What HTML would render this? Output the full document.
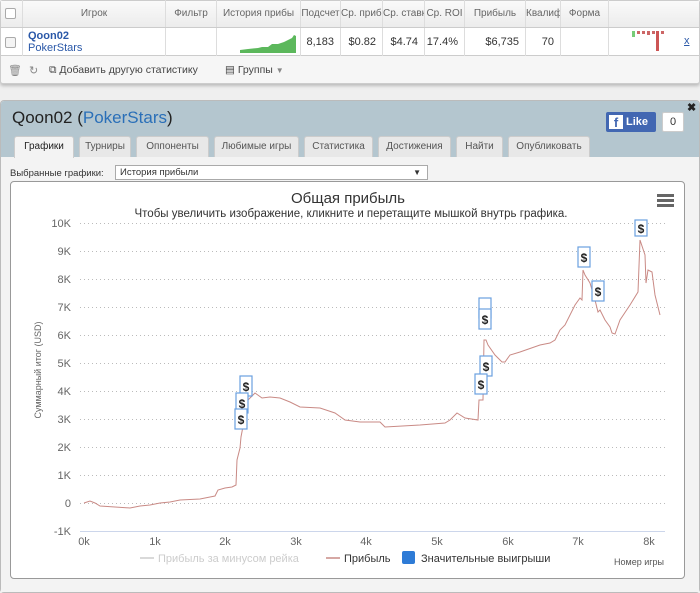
<!DOCTYPE html>
<html><head><meta charset="utf-8"><style>
*{margin:0;padding:0;box-sizing:border-box}
body{width:700px;height:593px;background:#efefef;font-family:"Liberation Sans",sans-serif;position:relative;overflow:hidden;font-size:11px;color:#333}
.a{position:absolute}
.th{position:absolute;top:0;height:27px;line-height:27px;text-align:center;color:#666;font-size:10px;border-right:1px solid #ddd;white-space:nowrap;overflow:hidden}
.td{position:absolute;top:28px;height:28px;line-height:28px;text-align:right;padding-right:6px;color:#333;font-size:11px;border-right:1px solid #ddd}
.tab{position:absolute;top:136px;height:21px;line-height:20px;background:#e8e8e8;border:1px solid #ccc;border-bottom:none;border-radius:3px 3px 0 0;font-size:10px;color:#555;text-align:center}
</style></head><body>
<!-- top table -->
<div class="a" style="left:0;top:0;width:700px;height:84px;background:#f6f6f6;border:1px solid #ccc;border-radius:3px;box-shadow:0 2px 3px #bbb"></div>
<div class="a" style="left:1px;top:1px;width:698px;height:27px;background:linear-gradient(#fafafa,#ececec);border-bottom:1px solid #ccc"></div>
<div class="a" style="left:1px;top:28px;width:698px;height:28px;background:#fff;border-bottom:1px solid #ccc"></div>
<div class="a" style="left:5px;top:8px;width:11px;height:11px;border:1px solid #aaa;border-radius:2px;background:#fff"></div>
<div class="a" style="left:5px;top:37px;width:11px;height:11px;border:1px solid #aaa;border-radius:2px;background:#f4f4f4"></div>
<div class="th" style="left:0;width:23px"></div>
<div class="th" style="left:23px;width:143px">Игрок</div>
<div class="th" style="left:166px;width:51px">Фильтр</div>
<div class="th" style="left:217px;width:84px">История прибы</div>
<div class="th" style="left:301px;width:40px">Подсчет</div>
<div class="th" style="left:341px;width:42px">Ср. прибы</div>
<div class="th" style="left:383px;width:42px">Ср. ставк</div>
<div class="th" style="left:425px;width:40px">Ср. ROI</div>
<div class="th" style="left:465px;width:61px">Прибыль</div>
<div class="th" style="left:526px;width:35px">Квалиф</div>
<div class="th" style="left:561px;width:48px">Форма</div>
<div class="td" style="left:0;width:23px"></div>
<div class="td" style="left:23px;width:143px"></div>
<div class="a" style="left:28px;top:30px;font-weight:bold;color:#2a58a8;font-size:11px">Qoon02</div>
<div class="a" style="left:28px;top:42px;color:#2a58a8;font-size:11px">PokerStars</div>
<div class="td" style="left:166px;width:51px"></div>
<div class="td" style="left:217px;width:84px"></div>
<svg class="a" style="left:228px;top:32px" width="70" height="22"><polygon points="4,21 12,21 12,18 20,17 30,16 34,15 40,15 44,12 50,12 56,10 60,8 64,6 66,3 68,4 68,21" fill="#5cb85c"/></svg>
<div class="td" style="left:301px;width:40px">8,183</div>
<div class="td" style="left:341px;width:42px">$0.82</div>
<div class="td" style="left:383px;width:42px">$4.74</div>
<div class="td" style="left:425px;width:40px">17.4%</div>
<div class="td" style="left:465px;width:61px">$6,735</div>
<div class="td" style="left:526px;width:35px">70</div>
<div class="td" style="left:561px;width:48px"></div>
<div class="a" style="left:632px;top:31px;width:3px;height:6px;background:#7c7"></div>
<div class="a" style="left:637px;top:31px;width:3px;height:3px;background:#c66"></div>
<div class="a" style="left:642px;top:31px;width:3px;height:3px;background:#c66"></div>
<div class="a" style="left:647px;top:31px;width:3px;height:4px;background:#c66"></div>
<div class="a" style="left:652px;top:31px;width:3px;height:3px;background:#c66"></div>
<div class="a" style="left:656px;top:31px;width:3px;height:20px;background:#c55"></div>
<div class="a" style="left:661px;top:31px;width:3px;height:3px;background:#c66"></div>
<div class="a" style="left:684px;top:35px;color:#2a58a8;text-decoration:underline;font-size:11px">x</div>
<div class="a" style="left:8px;top:64px;color:#888;font-size:11px">🗑</div>
<div class="a" style="left:29px;top:64px;color:#888;font-size:11px">↻</div>
<div class="a" style="left:49px;top:64px;color:#444;font-size:10.5px">⧉ Добавить другую статистику</div>
<div class="a" style="left:225px;top:64px;color:#444;font-size:10.5px">▤ Группы <span style="color:#888;font-size:8px">▼</span></div>
<!-- panel -->
<div class="a" style="left:0;top:100px;width:700px;height:493px;background:#fff;border:1px solid #bbb;border-radius:4px"></div>
<div class="a" style="left:1px;top:101px;width:698px;height:56px;background:#b4c6cf;border-radius:3px 3px 0 0"></div>
<div class="a" style="left:1px;top:157px;width:698px;height:435px;background:#f3f3f3"></div>
<div class="a" style="left:12px;top:108px;font-size:17px;color:#222">Qoon02 (<span style="color:#2a6fb8">PokerStars</span>)</div>
<div class="a" style="left:687px;top:101px;font-size:11px;font-weight:bold;color:#222">✖</div>
<div class="a" style="left:606px;top:112px;width:50px;height:20px;background:#4267b2;border-radius:2px;color:#fff;font-weight:bold;font-size:11px;line-height:20px"><span style="display:inline-block;width:14px;height:14px;background:#fff;color:#4267b2;margin:3px 3px 0 3px;text-align:center;line-height:16px;vertical-align:top;font-size:13px">f</span>Like</div>
<div class="a" style="left:662px;top:112px;width:22px;height:20px;background:#fff;border:1px solid #ccc;border-radius:2px;text-align:center;line-height:18px;font-size:11px">0</div>
<div class="tab" style="left:14px;width:60px;background:#f3f3f3;color:#222;height:22px">Графики</div>
<div class="tab" style="left:79px;width:52px">Турниры</div>
<div class="tab" style="left:136px;width:73px">Оппоненты</div>
<div class="tab" style="left:214px;width:85px">Любимые игры</div>
<div class="tab" style="left:304px;width:69px">Статистика</div>
<div class="tab" style="left:378px;width:73px">Достижения</div>
<div class="tab" style="left:456px;width:47px">Найти</div>
<div class="tab" style="left:508px;width:82px">Опубликовать</div>
<div class="a" style="left:10px;top:168px;font-size:9.5px;color:#333">Выбранные графики:</div>
<div class="a" style="left:115px;top:165px;width:313px;height:15px;background:#fff;border:1px solid #aaa;font-size:9.5px;line-height:13px;padding-left:4px">История прибыли<span style="position:absolute;right:6px;font-size:8px">▼</span></div>
<div class="a" style="left:10px;top:181px;width:675px;height:398px;background:#fff;border:1px solid #999;border-radius:4px"></div>
<div class="a" style="left:0;top:190px;width:700px;text-align:center;font-size:15px;color:#333;padding-right:4px">Общая прибыль</div>
<div class="a" style="left:0;top:208px;width:700px;text-align:center;font-size:11.5px;color:#333;padding-left:2px">Чтобы увеличить изображение, кликните и перетащите мышкой внутрь графика.</div>
<div class="a" style="left:657px;top:194px;width:17px;height:3px;background:#666;box-shadow:0 5px 0 #666,0 10px 0 #666"></div>
<svg class="a" style="left:0;top:0" width="700" height="593">
<g stroke="#bbb" stroke-width="1" stroke-dasharray="1,3">
<line x1="80" y1="223.5" x2="665" y2="223.5"/><line x1="80" y1="251.5" x2="665" y2="251.5"/><line x1="80" y1="279.5" x2="665" y2="279.5"/><line x1="80" y1="307.5" x2="665" y2="307.5"/><line x1="80" y1="335.5" x2="665" y2="335.5"/><line x1="80" y1="363.5" x2="665" y2="363.5"/><line x1="80" y1="391.5" x2="665" y2="391.5"/><line x1="80" y1="419.5" x2="665" y2="419.5"/><line x1="80" y1="447.5" x2="665" y2="447.5"/><line x1="80" y1="475.5" x2="665" y2="475.5"/><line x1="80" y1="503.5" x2="665" y2="503.5"/>
</g>
<line x1="80" y1="531.5" x2="665" y2="531.5" stroke="#ccd6eb"/>
<g font-size="11" fill="#666" text-anchor="end" font-family="Liberation Sans">
<text x="71" y="227">10K</text><text x="71" y="255">9K</text><text x="71" y="283">8K</text><text x="71" y="311">7K</text><text x="71" y="339">6K</text><text x="71" y="367">5K</text><text x="71" y="395">4K</text><text x="71" y="423">3K</text><text x="71" y="451">2K</text><text x="71" y="479">1K</text><text x="71" y="507">0</text><text x="71" y="535">-1K</text>
</g>
<g font-size="11" fill="#666" text-anchor="middle" font-family="Liberation Sans">
<text x="84" y="545">0k</text><text x="155" y="545">1k</text><text x="225" y="545">2k</text><text x="296" y="545">3k</text><text x="366" y="545">4k</text><text x="437" y="545">5k</text><text x="508" y="545">6k</text><text x="578" y="545">7k</text><text x="649" y="545">8k</text>
</g>
<text x="41" y="370" font-size="9" fill="#666" text-anchor="middle" transform="rotate(-90 41 370)" font-family="Liberation Sans">Суммарный итог (USD)</text>
<polyline fill="none" stroke="#c98a85" stroke-width="1" points="84,503 90,501 95,503 100,506 115,507 130,508 140,506 150,505 160,503 170,502 180,500 200,499 210,497 215,496 218,490 225,488 232,487 236,485 237,460 240,448 241,437 248,400 255,393 262,398 270,397 280,398 290,402 300,407 320,408 335,413 345,420 360,422 380,422 385,427 420,425 445,423 450,420 457,413 465,418 478,420 479,400 483,400 484,340 486,340 488,345 495,355 502,362 505,362 510,355 520,352 540,345 550,343 555,340 560,330 565,325 575,305 580,298 582,300 583,270 585,275 590,283 595,300 598,312 600,310 605,320 610,327 612,333 615,334 620,320 630,305 638,292 640,240 645,255 646,283 648,270 652,272 655,295 660,315"/>
<g fill="#fff" stroke="#6aa0e0" stroke-width="1.2">
<rect x="240" y="376" width="12" height="20"/><rect x="236" y="393" width="12" height="20"/><rect x="235" y="409" width="12" height="20"/>
<rect x="479" y="298" width="12" height="20"/><rect x="479" y="309" width="12" height="20"/>
<rect x="480" y="356" width="12" height="20"/><rect x="475" y="374" width="12" height="20"/>
<rect x="578" y="247" width="12" height="20"/><rect x="592" y="281" width="12" height="20"/><rect x="635" y="220" width="12" height="16"/>
</g>
<g font-size="12" font-weight="bold" fill="#222" text-anchor="middle" font-family="Liberation Sans">
<text x="246" y="391">$</text><text x="242" y="408">$</text><text x="241" y="424">$</text>
<text x="485" y="324">$</text><text x="486" y="371">$</text><text x="481" y="389">$</text>
<text x="584" y="262">$</text><text x="598" y="296">$</text><text x="641" y="233">$</text>
</g>
<line x1="140" y1="558" x2="154" y2="558" stroke="#ccc" stroke-width="1.5"/>
<text x="158" y="562" font-size="11" fill="#ccc" font-family="Liberation Sans">Прибыль за минусом рейка</text>
<line x1="326" y1="558" x2="340" y2="558" stroke="#c98a85" stroke-width="1.5"/>
<text x="344" y="562" font-size="11" fill="#333" font-family="Liberation Sans">Прибыль</text>
<rect x="402" y="551" width="13" height="13" rx="2" fill="#2e7bd6"/>
<text x="421" y="562" font-size="11" fill="#333" font-family="Liberation Sans">Значительные выигрыши</text>
<text x="664" y="565" font-size="9" fill="#555" text-anchor="end" font-family="Liberation Sans">Номер игры</text>
</svg>
</body></html>
